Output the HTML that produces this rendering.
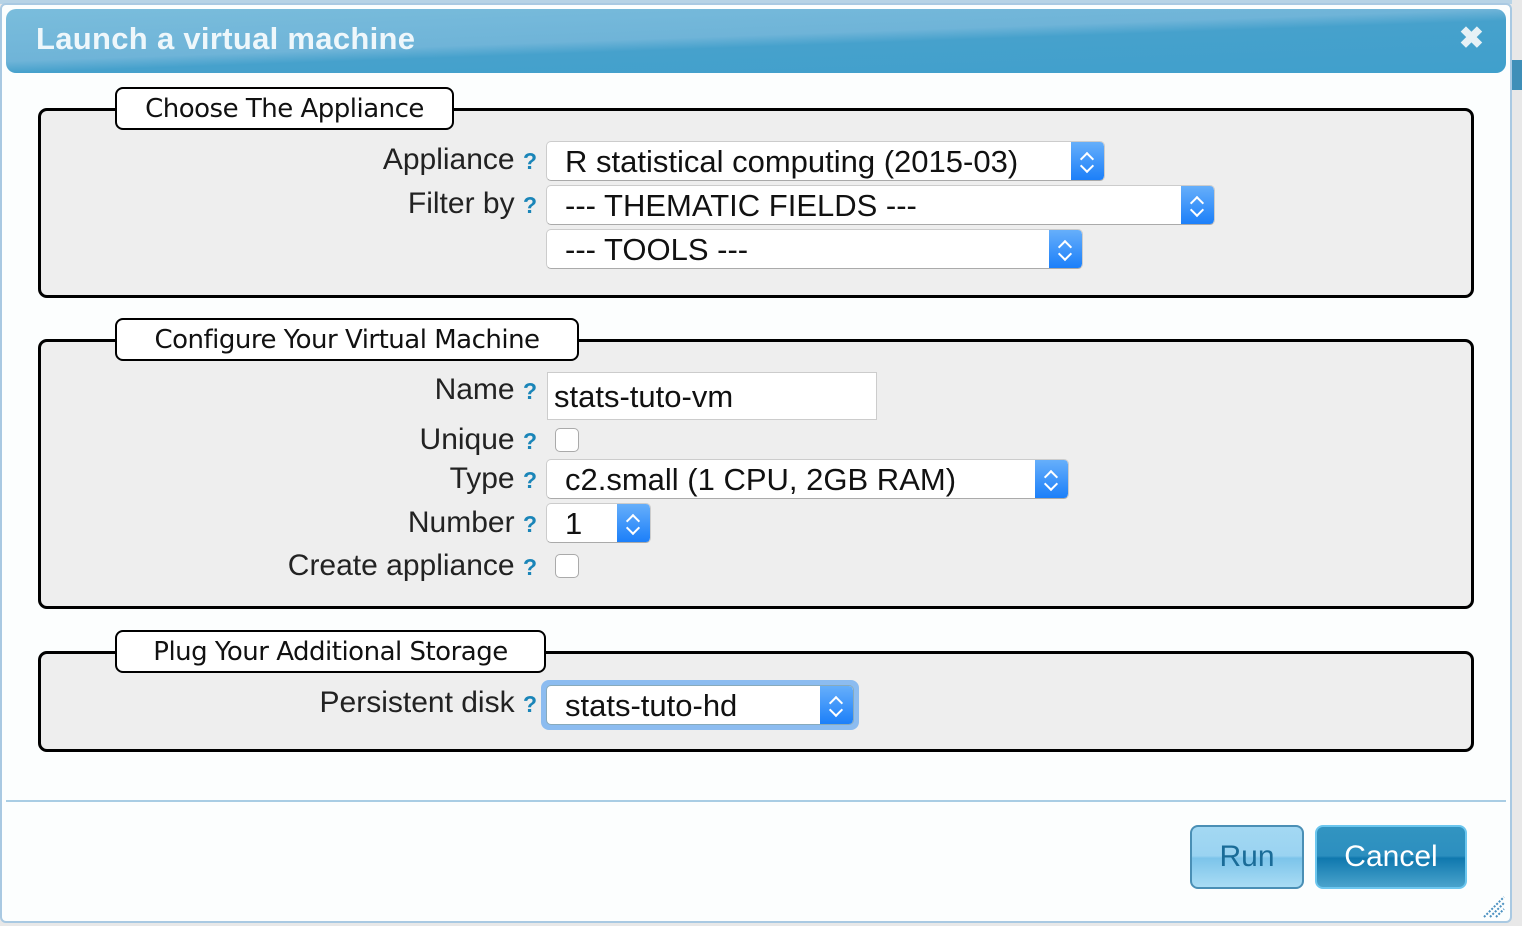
<!DOCTYPE html>
<html><head><meta charset="utf-8"><style>
*{box-sizing:border-box;margin:0;padding:0}
body{width:1522px;height:926px;background:#e8e8e8;position:relative;overflow:hidden;font-family:"Liberation Sans",sans-serif}
.abs{position:absolute}
#dlg{left:0;top:3px;width:1512px;height:920px;background:#fcfefe;border:2px solid #a9c9e2;border-radius:6px}
#title{left:6px;top:9px;width:1500px;height:64px;border-radius:10px;background:linear-gradient(178deg,#7abddc 0%,#6fb4d8 45%,#46a1cc 55%,#40a0cc 100%);}
#title span{position:absolute;left:30px;top:12px;color:#eef7fb;font-weight:bold;font-size:31px;letter-spacing:0.3px}
#title b{position:absolute;right:22px;top:12px;color:#e6f1f6;font-size:30px}
.fs{border:3px solid #000;border-radius:9px;background:#eee}
.lg{background:#fff;border:2px solid #000;border-radius:8px;color:#111;text-align:center;line-height:40px;font-family:"DejaVu Sans","Liberation Sans",sans-serif;font-size:26px;letter-spacing:-0.5px}
.lbl{font-size:30px;color:#222;text-align:right;width:422px;line-height:34px}
.q{color:#1a85b8;font-weight:bold;font-size:23px}
.sel{background:#fff;border:1px solid #ccc;border-bottom-color:#aaa;border-radius:5px;font-size:31px;color:#111;padding-left:18px;line-height:40px;height:40px;overflow:hidden;white-space:nowrap}
.sel i{position:absolute;right:0;top:-1px;bottom:-1px;width:33px;background:linear-gradient(#68b0fa,#1a7ef9);border-radius:0 5px 5px 0}
.sel i:before,.sel i:after{content:"";position:absolute;left:11px;width:8px;height:8px;border:2.5px solid #fff;border-right:none;border-bottom:none}
.sel i:before{top:13px;transform:rotate(45deg)}
.sel i:after{top:20px;transform:rotate(225deg)}
.cb{width:24px;height:24px;border:1px solid #aaa;border-radius:5px;background:#fff}
.btn{border-radius:8px;font-size:30px;text-align:center;line-height:60px}
</style></head><body>
<div class="abs" style="left:0;top:0;width:1512px;height:4px;background:#b7d3e6"></div>
<div class="abs" style="left:1512px;top:60px;width:10px;height:30px;background:#3f8fb8"></div>
<div class="abs" id="dlg"></div>
<div class="abs" id="title"><span>Launch a virtual machine</span><b>✖</b></div>

<div class="abs fs" style="left:38px;top:108px;width:1436px;height:190px"></div>
<div class="abs lg" style="left:115px;top:87px;width:339px;height:43px">Choose The Appliance</div>
<div class="abs lbl" style="left:115px;top:143px">Appliance <span class="q">?</span></div>
<div class="abs sel" style="left:546px;top:141px;width:559px">R statistical computing (2015-03)<i></i></div>
<div class="abs lbl" style="left:115px;top:187px">Filter by <span class="q">?</span></div>
<div class="abs sel" style="left:546px;top:185px;width:669px">--- THEMATIC FIELDS ---<i></i></div>
<div class="abs sel" style="left:546px;top:229px;width:537px">--- TOOLS ---<i></i></div>

<div class="abs fs" style="left:38px;top:339px;width:1436px;height:270px"></div>
<div class="abs lg" style="left:115px;top:318px;width:464px;height:43px">Configure Your Virtual Machine</div>
<div class="abs lbl" style="left:115px;top:373px">Name <span class="q">?</span></div>
<div class="abs" style="left:547px;top:372px;width:330px;height:48px;background:#fff;border:1px solid #ccc;font-size:31px;line-height:48px;padding-left:6px;color:#111">stats-tuto-vm</div>
<div class="abs lbl" style="left:115px;top:423px">Unique <span class="q">?</span></div>
<div class="abs cb" style="left:555px;top:428px"></div>
<div class="abs lbl" style="left:115px;top:462px">Type <span class="q">?</span></div>
<div class="abs sel" style="left:546px;top:459px;width:523px">c2.small (1 CPU, 2GB RAM)<i></i></div>
<div class="abs lbl" style="left:115px;top:506px">Number <span class="q">?</span></div>
<div class="abs sel" style="left:546px;top:503px;width:105px">1<i></i></div>
<div class="abs lbl" style="left:115px;top:549px">Create appliance <span class="q">?</span></div>
<div class="abs cb" style="left:555px;top:554px"></div>

<div class="abs fs" style="left:38px;top:651px;width:1436px;height:101px"></div>
<div class="abs lg" style="left:115px;top:630px;width:431px;height:43px">Plug Your Additional Storage</div>
<div class="abs lbl" style="left:115px;top:686px">Persistent disk <span class="q">?</span></div>
<div class="abs" style="left:541px;top:680px;width:318px;height:50px;border-radius:8px;background:#8cbcf0"></div>
<div class="abs sel" style="left:546px;top:685px;width:308px;border-color:#8ab">stats-tuto-hd<i></i></div>

<div class="abs" style="left:6px;top:800px;width:1500px;height:2px;background:#a9cde4"></div>
<div class="abs btn" style="left:1190px;top:825px;width:114px;height:64px;border:2px solid #4a8fb5;background:linear-gradient(#a3d8f3 0%,#9ad3f1 48%,#7cc4ea 52%,#a9dcf4 100%);color:#1a6c98">Run</div>
<div class="abs btn" style="left:1315px;top:825px;width:152px;height:64px;border:2px solid #6cc6ee;background:linear-gradient(#3294c1 0%,#2c8fbf 48%,#0f78ae 52%,#4aa3cc 100%);color:#fff">Cancel</div>
<svg class="abs" style="left:1482px;top:895px" width="24" height="24"><path d="M2 22L22 2M8 22L22 8M14 22L22 14" stroke="#4a90c0" stroke-width="2" stroke-dasharray="2 1.5"/></svg>
</body></html>
